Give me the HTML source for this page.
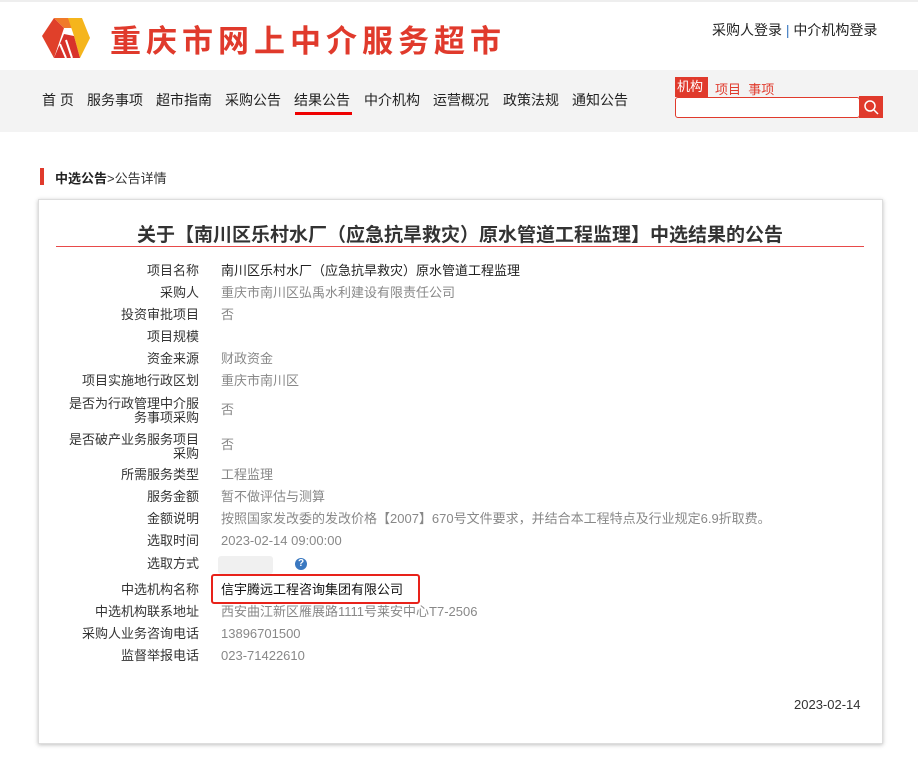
<!DOCTYPE html>
<html><head><meta charset="utf-8"><style>
*{margin:0;padding:0;box-sizing:border-box}
body{width:918px;height:770px;background:#fff;font-family:"Liberation Sans","Noto Sans CJK SC",sans-serif;position:relative;overflow:hidden;color:#333}
.abs{position:absolute}
.topline{left:0;top:0;width:918px;height:2px;background:#eee}
.logo-t{left:110px;top:16px;font-size:31px;color:#e03a2c;letter-spacing:5px;font-weight:bold;white-space:nowrap}
.login{left:712px;top:20px;font-size:14px;color:#222;white-space:nowrap}
.nav{left:0;top:70px;width:918px;height:62px;background:#f3f3f3}
.nav span{position:absolute;top:20px;font-size:14px;color:#222;white-space:nowrap}
.crumb{left:55px;top:168px;font-size:13px;white-space:nowrap}
.card{left:38px;top:199px;width:845px;height:545px;border:1px solid #ddd;box-shadow:0 1px 4px rgba(0,0,0,.25)}
.title{left:0;top:220px;width:918px;text-align:center;font-size:19px;font-weight:bold;color:#333;white-space:nowrap;padding-left:2px}
.lbl{position:absolute;right:719px;width:140px;text-align:right;font-size:13px;color:#333;line-height:14px}
.val{position:absolute;left:221px;font-size:13px;color:#888;white-space:nowrap;line-height:14px}
</style></head><body>
<div class="abs topline"></div>
<svg class="abs" style="left:40px;top:14px" width="52" height="48" viewBox="0 0 52 48">
<polygon points="2,22 14,4 24,14 14,44" fill="#e0402a"/>
<polygon points="14,4 28,4 36,14 24,14" fill="#f07a2a"/>
<polygon points="28,4 42,4 50,24 40,44 34,22" fill="#f5b51c"/>
<polygon points="14,44 24,20 34,22 40,44" fill="#d8322a"/>
<path d="M20 30 L26 44 M26 26 L32 44" stroke="#fff" stroke-width="2"/>
</svg>
<div class="abs logo-t">重庆市网上中介服务超市</div>
<div class="abs login">采购人登录 <span style="color:#3a78c0">|</span> 中介机构登录</div>
<div class="abs nav">
<span style="left:42px">首 页</span>
<span style="left:87px">服务事项</span>
<span style="left:156px">超市指南</span>
<span style="left:225px">采购公告</span>
<span style="left:294px">结果公告</span>
<div style="position:absolute;left:295px;top:42px;width:57px;height:3px;background:#e00"></div>
<span style="left:364px">中介机构</span>
<span style="left:433px">运营概况</span>
<span style="left:503px">政策法规</span>
<span style="left:572px">通知公告</span>
<div style="position:absolute;left:675px;top:7px;width:33px;height:20px;background:#e03a2c;color:#fff;font-size:13px;line-height:20px;padding-left:2px">机构</div>
<div style="position:absolute;left:715px;top:9px;font-size:13px;color:#e03a2c">项目 &nbsp;事项</div>
<div style="position:absolute;left:675px;top:27px;width:185px;height:21px;border:1px solid #e03a2c;border-radius:3px;background:#fff"></div>
<div style="position:absolute;left:859px;top:26px;width:24px;height:22px;background:#e03a2c">
<svg width="24" height="22"><circle cx="11" cy="10" r="5" stroke="#fff" stroke-width="1.5" fill="none"/><path d="M15 14 L19 18" stroke="#fff" stroke-width="1.5"/></svg></div>
</div>
<div class="abs" style="left:40px;top:168px;width:4px;height:17px;background:#e03a2c"></div>
<div class="abs crumb"><b style="color:#222">中选公告</b>&gt;公告详情</div>
<div class="abs card"></div>
<div class="abs title">关于【南川区乐村水厂（应急抗旱救灾）原水管道工程监理】中选结果的公告</div>
<div class="abs" style="left:56px;top:246px;width:808px;height:1px;background:#e84a4a"></div>

<div class="lbl" style="top:264px">项目名称</div><div class="val" style="top:264px;color:#222">南川区乐村水厂（应急抗旱救灾）原水管道工程监理</div>
<div class="lbl" style="top:286px">采购人</div><div class="val" style="top:286px">重庆市南川区弘禹水利建设有限责任公司</div>
<div class="lbl" style="top:308px">投资审批项目</div><div class="val" style="top:308px">否</div>
<div class="lbl" style="top:330px">项目规模</div>
<div class="lbl" style="top:352px">资金来源</div><div class="val" style="top:352px">财政资金</div>
<div class="lbl" style="top:374px">项目实施地行政区划</div><div class="val" style="top:374px">重庆市南川区</div>
<div class="lbl" style="top:397px">是否为行政管理中介服务事项采购</div><div class="val" style="top:403px">否</div>
<div class="lbl" style="top:433px">是否破产业务服务项目采购</div><div class="val" style="top:438px">否</div>
<div class="lbl" style="top:468px">所需服务类型</div><div class="val" style="top:468px">工程监理</div>
<div class="lbl" style="top:490px">服务金额</div><div class="val" style="top:490px">暂不做评估与测算</div>
<div class="lbl" style="top:512px">金额说明</div><div class="val" style="top:512px">按照国家发改委的发改价格【2007】670号文件要求，并结合本工程特点及行业规定6.9折取费。</div>
<div class="lbl" style="top:534px">选取时间</div><div class="val" style="top:534px">2023-02-14 09:00:00</div>
<div class="lbl" style="top:557px">选取方式</div>
<div class="abs" style="left:218px;top:556px;width:55px;height:18px;background:#f0f0f0;border-radius:3px"></div>
<div class="abs" style="left:295px;top:558px;width:12px;height:12px;border-radius:50%;background:#3a78c0;color:#fff;font-size:10px;line-height:12px;text-align:center;font-weight:bold">?</div>
<div class="lbl" style="top:583px">中选机构名称</div>
<div class="abs" style="left:211px;top:574px;width:209px;height:30px;border:2px solid #e8221a;border-radius:3px"></div>
<div class="val" style="top:583px;color:#111">信宇腾远工程咨询集团有限公司</div>
<div class="lbl" style="top:605px">中选机构联系地址</div><div class="val" style="top:605px">西安曲江新区雁展路1111号莱安中心T7-2506</div>
<div class="lbl" style="top:627px">采购人业务咨询电话</div><div class="val" style="top:627px">13896701500</div>
<div class="lbl" style="top:649px">监督举报电话</div><div class="val" style="top:649px">023-71422610</div>
<div class="abs" style="left:794px;top:697px;font-size:13px;color:#333">2023-02-14</div>
</body></html>
